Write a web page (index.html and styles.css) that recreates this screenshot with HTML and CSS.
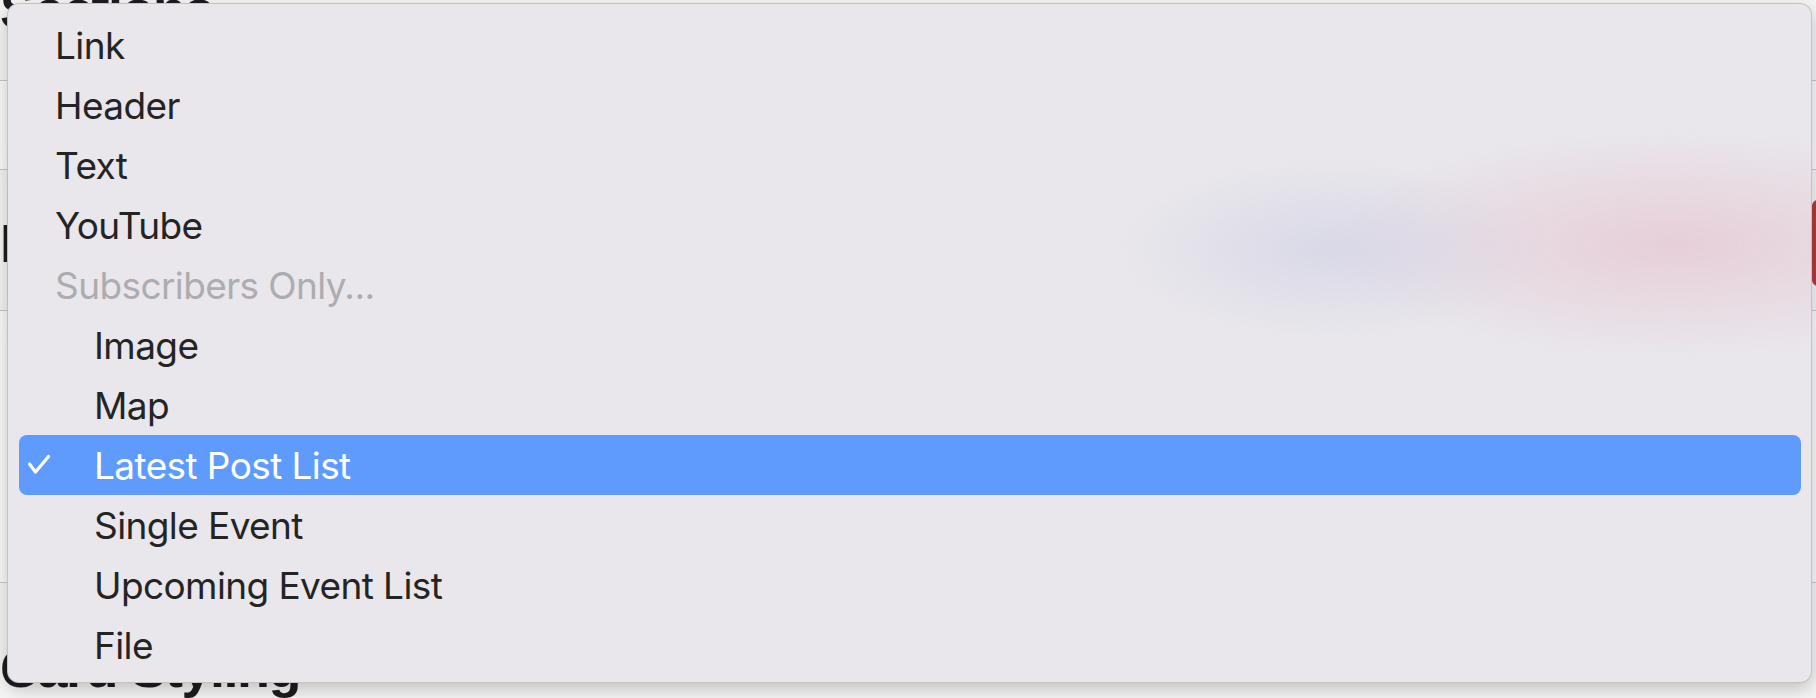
FILE: index.html
```html
<!DOCTYPE html>
<html lang="en">
<head>
    <meta charset="UTF-8">
    <meta name="viewport" content="width=device-width, initial-scale=1.0">
    <title>Section Type</title>
    <link rel="stylesheet" href="styles.css">
</head>
<body>
    <div class="page">
        <h2 class="heading heading-top">Sections</h2>
        <div class="card card-small"></div>
        <div class="row">
            <h2 class="heading">Embed</h2>
            <button class="danger">Delete</button>
        </div>
        <div class="card card-large"></div>
        <h2 class="heading heading-bottom">Card Styling</h2>
    </div>

    <div class="menu">
        <ul class="menu-list">
            <li class="item">Link</li>
            <li class="item">Header</li>
            <li class="item">Text</li>
            <li class="item">YouTube</li>
            <li class="item disabled">Subscribers Only...</li>
            <li class="item sub">Image</li>
            <li class="item sub">Map</li>
            <li class="item sub selected">
                <svg class="check" width="24" height="24" viewBox="0 0 24 24">
                    <polyline points="1.5,11 7.5,19 20.5,3.5" fill="none" stroke="#fff" stroke-width="3.2" stroke-linecap="round" stroke-linejoin="round"/>
                </svg>
                Latest Post List
            </li>
            <li class="item sub">Single Event</li>
            <li class="item sub">Upcoming Event List</li>
            <li class="item sub">File</li>
        </ul>
    </div>
</body>
</html>
```

FILE: styles.css
```css
* {
    margin: 0;
    padding: 0;
    box-sizing: border-box;
}

body {
    width: 1816px;
    height: 698px;
    overflow: hidden;
    background-color: #f5f5f6;
    font-family: 'Liberation Sans', Arial, sans-serif;
    position: relative;
}

/* page underneath the popup */
.page {
    display: flex;
    flex-direction: column;
    margin-top: -22px;
}

.heading {
    font-size: 54px;
    font-weight: bold;
    letter-spacing: -1.5px;
    color: #1d1d1f;
    line-height: 62px;
    white-space: nowrap;
}

.card {
    border: 1px solid #c8c8cc;
    border-radius: 14px;
    background-color: #fafafa;
    margin-right: -20px;
}

.card-small {
    height: 90px;
    margin-top: 40px;
    margin-left: -20px;
}

.row {
    display: flex;
    justify-content: space-between;
    align-items: center;
    margin-top: 30px;
}

.danger {
    width: 120px;
    height: 86px;
    margin-right: -116px;
    background-color: #b23b3b;
    border: none;
    border-radius: 6px;
    color: #fff;
}

.card-large {
    height: 273px;
    margin-top: 24px;
    margin-left: -20px;
}

.heading-bottom {
    margin-top: 54px;
}

/* popup menu */
.menu {
    position: absolute;
    left: 7px;
    top: 3px;
    width: 1805px;
    height: 680px;
    padding: 11px 10px 9px 11px;
    border-radius: 12px;
    border: 1px solid rgba(0, 0, 0, 0.16);
    background-color: #e9e7ec;
    background-image:
        radial-gradient(ellipse 215px 90px at 1325px 245px, rgba(206, 207, 228, 0.6), rgba(206, 207, 228, 0)),
        radial-gradient(ellipse 350px 115px at 1665px 240px, rgba(230, 196, 208, 0.7), rgba(230, 196, 208, 0));
    box-shadow: 0 6px 18px rgba(0, 0, 0, 0.22);
    font-family: 'Inter', 'Noto Sans', sans-serif;
}

.menu-list {
    list-style: none;
}

.item {
    position: relative;
    height: 60px;
    display: flex;
    align-items: center;
    padding-left: 36px;
    font-size: 37px;
    letter-spacing: -0.6px;
    color: #242424;
    border-radius: 8px;
}

.sub {
    padding-left: 75px;
}

.disabled {
    color: #adacb1;
}

.selected {
    background-color: #5e9bfd;
    color: #fff;
}

.check {
    position: absolute;
    left: 9px;
    top: 18px;
}
```
